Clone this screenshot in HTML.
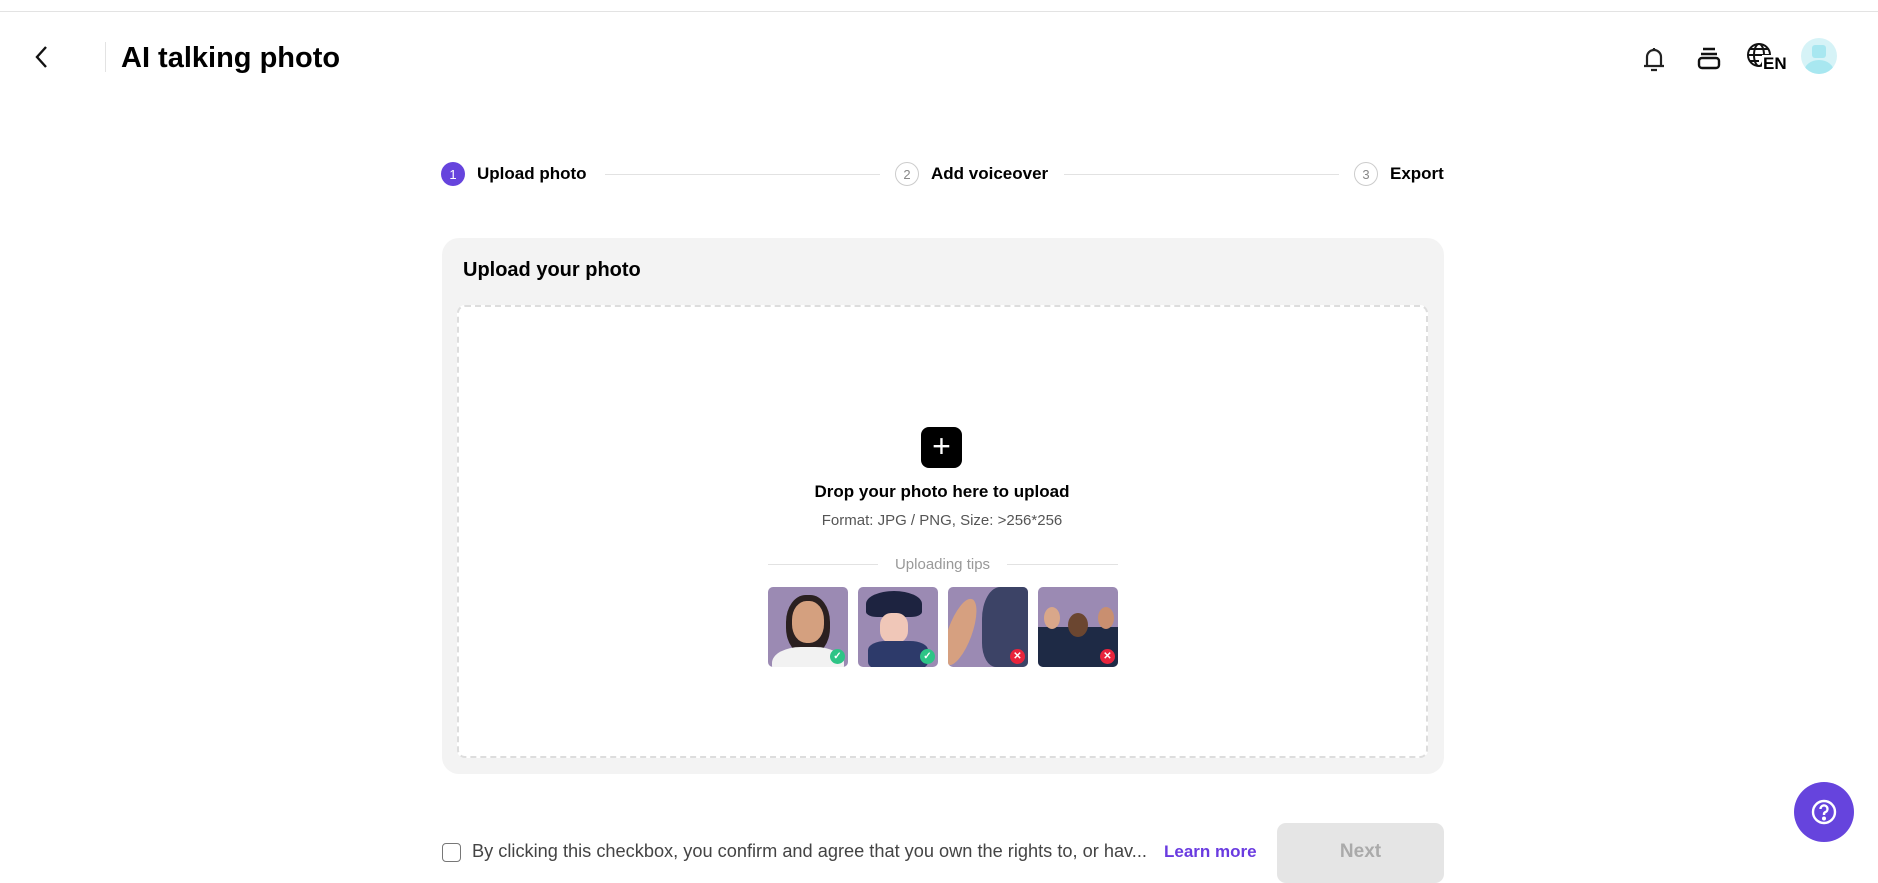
<!DOCTYPE html>
<html><head><meta charset="utf-8"><style>
*{box-sizing:border-box;margin:0;padding:0}
body{width:1878px;height:874px;overflow:hidden;background:#fff;font-family:"Liberation Sans",sans-serif;color:#000;position:relative}
.abs{position:absolute}
.step{position:absolute;top:162px;height:24px;display:flex;align-items:center;font-size:17px;font-weight:bold}
.c{width:24px;height:24px;border-radius:50%;display:flex;align-items:center;justify-content:center;font-size:13px;font-weight:normal;margin-right:12px}
.line{position:absolute;top:174px;height:1px;background:#e2e2e2}
.img{position:absolute;top:587px;width:80px;height:80px;border-radius:5px;background:#9b8ab3;overflow:hidden}
.badge{position:absolute;right:3px;bottom:3px;width:15px;height:15px;border-radius:50%;color:#fff;font-size:10px;display:flex;align-items:center;justify-content:center;font-weight:bold}
</style></head><body>
<div class="abs" style="left:0;top:11px;width:1878px;height:1px;background:#e3e3e3"></div>
<svg class="abs" style="left:32px;top:45px" width="20" height="24" viewBox="0 0 20 24"><path d="M14 2 L5 12 L14 22" fill="none" stroke="#111" stroke-width="2.4"/></svg>
<div class="abs" style="left:105px;top:42px;width:1px;height:30px;background:#e3e3e3"></div>
<div class="abs" style="left:121px;top:42px;font-size:29px;font-weight:bold">AI talking photo</div>
<svg class="abs" style="left:1638px;top:42px" width="32" height="32" viewBox="0 0 32 32" fill="none" stroke="#222" stroke-width="2.2"><path d="M9 24 V15 A7 7 0 0 1 23 15 V24 M6 24 H26 M16 6 V8 M13 28 H19"/></svg>
<svg class="abs" style="left:1693px;top:42px" width="32" height="32" viewBox="0 0 32 32" fill="none" stroke="#111" stroke-width="2.4"><path d="M10 7 H22 M8 12 H24"/><rect x="6" y="16" width="20" height="10" rx="3"/></svg>
<svg class="abs" style="left:1745px;top:41px" width="40" height="34" viewBox="0 0 40 34" fill="none" stroke="#111" stroke-width="2"><circle cx="14" cy="14" r="11"/><ellipse cx="14" cy="14" rx="5" ry="11"/><path d="M3 14 H25 M5 8 H23 M5 20 H14"/></svg>
<div class="abs" style="left:1762px;top:55px;font-size:17px;font-weight:bold;background:#fff;padding:0 1px;line-height:18px">EN</div>
<div class="abs" style="left:1801px;top:38px;width:36px;height:36px;border-radius:50%;background:#d6f3f7;overflow:hidden"><div class="abs" style="left:11px;top:7px;width:14px;height:13px;background:#a8e7f0;border-radius:3px"></div><div class="abs" style="left:3px;top:22px;width:30px;height:24px;background:#a8e7f0;border-radius:50%"></div></div>

<div class="step" style="left:441px"><div class="c" style="background:#6644dd;color:#fff">1</div>Upload photo</div>
<div class="line" style="left:605px;width:275px"></div>
<div class="step" style="left:895px"><div class="c" style="border:1px solid #ccc;color:#888">2</div>Add voiceover</div>
<div class="line" style="left:1064px;width:275px"></div>
<div class="step" style="left:1354px"><div class="c" style="border:1px solid #ccc;color:#888">3</div>Export</div>

<div class="abs" style="left:442px;top:238px;width:1002px;height:536px;background:#f3f3f3;border-radius:17px"></div>
<div class="abs" style="left:463px;top:259px;font-size:20px;font-weight:bold">Upload your photo</div>
<div class="abs" style="left:457px;top:305px;width:971px;height:453px;background:#fff;border:2px dashed #ddd;border-radius:8px"></div>
<div class="abs" style="left:921px;top:427px;width:41px;height:41px;background:#000;border-radius:8px;color:#fff;font-size:32px;line-height:39px;text-align:center;font-weight:300">+</div>
<div class="abs" style="left:742px;top:482px;width:400px;text-align:center;font-size:17px;font-weight:bold">Drop your photo here to upload</div>
<div class="abs" style="left:742px;top:512px;width:400px;text-align:center;font-size:15px;color:#555">Format: JPG / PNG, Size: &gt;256*256</div>
<div class="abs" style="left:768px;top:564px;width:110px;height:1px;background:#e2e2e2"></div>
<div class="abs" style="left:1007px;top:564px;width:111px;height:1px;background:#e2e2e2"></div>
<div class="abs" style="left:878px;top:556px;width:129px;text-align:center;font-size:15px;color:#999">Uploading tips</div>
<div class="img" style="left:768px"><div class="abs" style="left:18px;top:8px;width:44px;height:60px;border-radius:45%;background:#2a2020"></div><div class="abs" style="left:24px;top:14px;width:32px;height:42px;border-radius:45%;background:#d4a07f"></div><div class="abs" style="left:4px;top:60px;width:72px;height:40px;border-radius:40%;background:#f2f2f2"></div><div class="badge" style="background:#2ec486">✓</div></div>
<div class="img" style="left:858px"><div class="abs" style="left:8px;top:4px;width:56px;height:26px;border-radius:50% 50% 20% 20%;background:#1d2340"></div><div class="abs" style="left:22px;top:26px;width:28px;height:30px;border-radius:40%;background:#f0c7b8"></div><div class="abs" style="left:10px;top:54px;width:60px;height:30px;border-radius:30%;background:#2d3a6a"></div><div class="badge" style="background:#2ec486">✓</div></div>
<div class="img" style="left:948px"><div class="abs" style="left:34px;top:0;width:46px;height:80px;background:#3c4366;border-radius:40% 0 0 30%"></div><div class="abs" style="left:0;top:10px;width:24px;height:70px;background:#d6a080;border-radius:50%;transform:rotate(20deg)"></div><div class="badge" style="background:#e8243c">✕</div></div>
<div class="img" style="left:1038px"><div class="abs" style="left:0;top:40px;width:80px;height:40px;background:#1e2a45"></div><div class="abs" style="left:30px;top:26px;width:20px;height:24px;border-radius:50%;background:#6b4630"></div><div class="abs" style="left:6px;top:20px;width:16px;height:22px;border-radius:50%;background:#d9a78a"></div><div class="abs" style="left:60px;top:20px;width:16px;height:22px;border-radius:50%;background:#c98f70"></div><div class="badge" style="background:#e8243c">✕</div></div>

<div class="abs" style="left:442px;top:843px;width:19px;height:19px;border:1.5px solid #777;border-radius:4px"></div>
<div class="abs" style="left:472px;top:841px;font-size:18.2px;color:#444;white-space:nowrap">By clicking this checkbox, you confirm and agree that you own the rights to, or hav...</div>
<div class="abs" style="left:1164px;top:842px;font-size:17px;color:#6a3be0;font-weight:bold">Learn more</div>
<div class="abs" style="left:1277px;top:823px;width:167px;height:60px;background:#e5e5e5;border-radius:9px;color:#aaa;font-size:19px;font-weight:bold;text-align:center;line-height:58px">Next</div>

<div class="abs" style="left:1794px;top:782px;width:60px;height:60px;border-radius:50%;background:#6644dd"></div>
<svg class="abs" style="left:1810px;top:798px" width="28" height="28" viewBox="0 0 28 28" fill="none" stroke="#fff" stroke-width="2.4"><circle cx="14" cy="14" r="11"/><path d="M10.5 11 A3.5 3.5 0 1 1 15 14.3 C14 14.8 14 15.5 14 17"/><circle cx="14" cy="20.5" r="0.8" fill="#fff"/></svg>
</body></html>
